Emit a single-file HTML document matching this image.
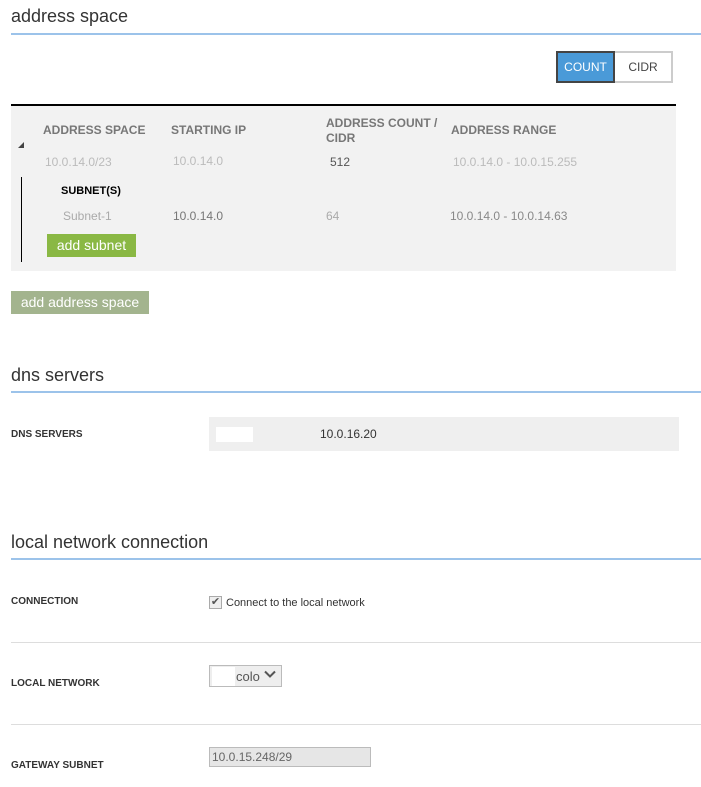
<!DOCTYPE html><html><head><style>
body{margin:0;width:701px;height:787px;background:#fff;font-family:"Liberation Sans",sans-serif;position:relative;overflow:hidden}
div,span{position:absolute}
.h{font-size:18px;color:#333;left:11px}
.ln{left:11px;width:690px;height:2px;background:#9cc3ea}
.th{font-size:12px;font-weight:bold;color:#777}
.g{font-size:12px;color:#bbb}
.d{font-size:12px;color:#888}
.lb{font-size:10px;font-weight:bold;color:#333;left:11px}
.sep{left:11px;width:690px;height:1px;background:#ddd}
</style></head><body>
<div class="h" style="top:6px">address space</div>
<div class="ln" style="top:33px"></div>
<div style="left:556px;top:51px;width:55px;height:28px;background:#4a9ad8;border:2px solid #444;color:#fff;font-size:12px;line-height:28px;text-align:center">COUNT</div>
<div style="left:615px;top:51px;width:56px;height:28px;border:2px solid #ccc;border-left:none;color:#444;font-size:12px;line-height:28px;text-align:center">CIDR</div>
<div style="left:11px;top:104px;width:665px;height:2px;background:#000"></div>
<div style="left:11px;top:106px;width:665px;height:165px;background:#f2f2f2"></div>
<div class="th" style="left:43px;top:123px">ADDRESS SPACE</div>
<div class="th" style="left:171px;top:123px">STARTING IP</div>
<div class="th" style="left:326px;top:116px;line-height:15px">ADDRESS COUNT /<br>CIDR</div>
<div class="th" style="left:451px;top:123px">ADDRESS RANGE</div>
<div style="left:18px;top:142px;width:0;height:0;border-left:6px solid transparent;border-bottom:6px solid #444"></div>
<div class="g" style="left:45px;top:155px">10.0.14.0/23</div>
<div class="g" style="left:173px;top:154px">10.0.14.0</div>
<div class="d" style="left:330px;top:155px;color:#555">512</div>
<div class="g" style="left:453px;top:155px">10.0.14.0 - 10.0.15.255</div>
<div style="left:21px;top:177px;width:1px;height:85px;background:#000"></div>
<div style="left:61px;top:185px;font-size:11px;font-weight:bold;color:#000">SUBNET(S)</div>
<div class="g" style="left:63px;top:209px;color:#aaa">Subnet-1</div>
<div class="d" style="left:173px;top:209px;color:#777">10.0.14.0</div>
<div class="g" style="left:326px;top:209px;color:#aaa">64</div>
<div class="d" style="left:450px;top:209px">10.0.14.0 - 10.0.14.63</div>
<div style="left:47px;top:234px;width:89px;height:23px;background:#8ab844;color:#fff;font-size:14px;line-height:22px;text-align:center">add subnet</div>
<div style="left:11px;top:291px;width:138px;height:23px;background:#a3b48e;color:#fff;font-size:14px;line-height:22px;text-align:center">add address space</div>
<div class="h" style="top:365px">dns servers</div>
<div class="ln" style="top:391px"></div>
<div class="lb" style="top:429px">DNS SERVERS</div>
<div style="left:209px;top:417px;width:470px;height:34px;background:#efefef"></div>
<div style="left:216px;top:427px;width:37px;height:15px;background:#fff"></div>
<div style="left:320px;top:427px;font-size:12px;color:#333">10.0.16.20</div>
<div class="h" style="top:532px">local network connection</div>
<div class="ln" style="top:558px"></div>
<div class="lb" style="top:596px">CONNECTION</div>
<div style="left:209px;top:596px;width:11px;height:11px;border:1px solid #aaa;background:#eee;font-size:11px;line-height:11px;color:#555;text-align:center">✔</div>
<div style="left:226px;top:597px;font-size:11px;color:#333">Connect to the local network</div>
<div class="sep" style="top:642px"></div>
<div class="lb" style="top:678px">LOCAL NETWORK</div>
<div style="left:209px;top:665px;width:71px;height:20px;border:1px solid #bbb;background:#eee"></div>
<div style="left:212px;top:667px;width:23px;height:19px;background:#fff"></div>
<div style="left:236px;top:669px;font-size:13px;color:#555">colo</div>
<svg style="position:absolute;left:264px;top:670px" width="12" height="9"><path d="M1 1.5 L6 6.5 L11 1.5" fill="none" stroke="#555" stroke-width="2"/></svg>
<div class="sep" style="top:724px"></div>
<div class="lb" style="top:760px">GATEWAY SUBNET</div>
<div style="left:209px;top:747px;width:158px;height:18px;border:1px solid #bbb;background:#e6e6e6;font-size:12px;color:#666;line-height:18px;padding-left:2px;box-sizing:content-box">10.0.15.248/29</div>
</body></html>
